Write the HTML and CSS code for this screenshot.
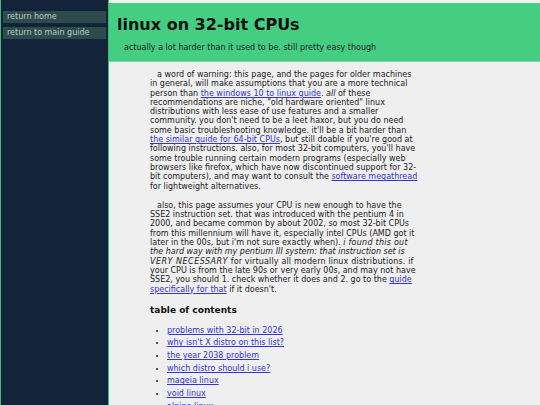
FILE: index.html
```html
<!DOCTYPE html>
<html>
<head>
<meta charset="utf-8">
<title>linux on 32-bit CPUs</title>
<link rel="stylesheet" href="styles.css">
</head>
<body>
<nav class="sidebar">
  <a class="navbtn" href="#">return home</a>
  <a class="navbtn" href="#">return to main guide</a>
</nav>
<div class="main">
  <header class="header">
    <h1 class="title">linux on 32-bit CPUs</h1>
    <p class="subtitle">actually a lot harder than it used to be. still pretty easy though</p>
  </header>
  <div class="content">
    <p class="para">a word of warning: this page, and the pages for older machines in general, will make assumptions that you are a more technical person than <a href="#">the windows 10 to linux guide</a>. <em>all</em> of these recommendations are niche, "old hardware oriented" linux distributions with less ease of use features and a smaller community. you don't need to be a leet haxor, but you do need some basic troubleshooting knowledge. it'll be a bit harder than <a href="#">the similar guide for 64-bit CPUs</a>, but still doable if you're good at following instructions. also, for most 32-bit computers, you'll have some trouble running certain modern programs (especially web browsers like firefox, which have now discontinued support for 32-bit computers), and may want to consult the <a href="#">software megathread</a> for lightweight alternatives.</p>
    <p class="para">also, this page assumes your CPU is new enough to have the SSE2 instruction set. that was introduced with the pentium 4 in 2000, and became common by about 2002, so most 32-bit CPUs from this millennium will have it, especially intel CPUs (AMD got it later in the 00s, but i'm not sure exactly when). <em><span class="wide">i found this out</span> the hard way with my pentium III system: that instruction set is <span class="wider">VERY NECESSARY</span></em><span class="loose"> for virtually all modern linux distributions. if</span> your CPU is from the late 90s or very early 00s, and may not have SSE2, you should 1. check whether it does and 2. go to the <a href="#">guide specifically for that</a> if it doesn't.</p>
    <h2 class="toc-title">table of contents</h2>
    <ul class="toc">
      <li><a href="#">problems with 32-bit in 2026</a></li>
      <li><a href="#">why isn't X distro on this list?</a></li>
      <li><a href="#">the year 2038 problem</a></li>
      <li><a href="#">which distro should i use?</a></li>
      <li><a href="#">mageia linux</a></li>
      <li><a href="#">void linux</a></li>
      <li><a href="#">alpine linux</a></li>
    </ul>
  </div>
</div>
</body>
</html>
```

FILE: styles.css
```css
html, body {
  margin: 0;
  padding: 0;
  height: 100%;
  overflow: hidden;
}
body {
  display: flex;
  background: #efefef;
  font-family: "DejaVu Sans", Verdana, sans-serif;
  font-size: 8px;
  line-height: 9.3px;
  color: #222;
}
.sidebar {
  flex: none;
  min-height: 100vh;
  background: #13243a;
  border-left: 1px solid #3fb777;
  border-right: 1px solid #3fb777;
  padding: 11px 2px 0 2px;
  box-sizing: content-box;
  display: flex;
  flex-direction: column;
  gap: 4px;
  width: 103px;
}
.navbtn {
  display: block;
  background: #2e4b4b;
  color: #bcc6c6;
  text-decoration: none;
  height: 12px;
  line-height: 12px;
  padding-left: 4px;
}
.main {
  flex: 1;
  min-width: 0;
}
.header {
  margin-top: 3px;
  background: #45cd82;
  border-bottom: 1px solid #7fdca8;
  height: 59px;
  padding-left: 8px;
  box-sizing: border-box;
}
.title {
  margin: 0;
  padding-top: 12px;
  font-size: 16px;
  font-weight: bold;
  color: #111;
  line-height: 19px;
}
.subtitle {
  margin: 9px 0 0 7px;
  color: #222;
}
.content {
  width: 270px;
  margin-left: 41px;
  padding-top: 8px;
}
.para {
  margin: 0 0 10px 0;
  text-indent: 7px;
}
.wide {
  letter-spacing: 0.25px;
}
.wider {
  letter-spacing: 0.5px;
}
.loose {
  letter-spacing: 0.15px;
}
.para a, .toc a {
  color: #3434cc;
}
.toc-title {
  font-size: 9px;
  font-weight: bold;
  color: #111;
  line-height: 11px;
  margin: 11px 0 10px 0;
}
.toc {
  margin: 0;
  padding-left: 17px;
}
.toc li {
  margin-bottom: 3.37px;
}
```
